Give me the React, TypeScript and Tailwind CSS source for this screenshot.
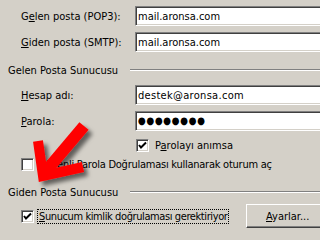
const sunken =
  "border border-t-[#808080] border-l-[#808080] border-r-white border-b-white shadow-[inset_1px_1px_0_#404040,inset_-1px_-1px_0_#d4d0c8]";

function TextBox({ children }: { children: React.ReactNode }) {
  return (
    <div className={`h-[20px] w-[200px] shrink-0 bg-white ${sunken} flex items-center pl-[2px]`}>
      {children}
    </div>
  );
}

function Check({ checked }: { checked?: boolean }) {
  return (
    <div className={`w-[13px] h-[13px] shrink-0 bg-white ${sunken} flex items-center justify-center`}>
      {checked && (
        <svg width="9" height="9" viewBox="0 0 9 9">
          <path d="M1 4 L3 6.5 L8 1.5" fill="none" stroke="#000" strokeWidth="2" />
        </svg>
      )}
    </div>
  );
}

function Field({ label, keyIdx, children }: { label: string; keyIdx: number; children: React.ReactNode }) {
  return (
    <div className="flex items-center h-[20px]">
      <span className="w-[135px] shrink-0 pl-[21px]">
        {label.slice(0, keyIdx)}
        <u>{label[keyIdx]}</u>
        {label.slice(keyIdx + 1)}
      </span>
      {children}
    </div>
  );
}

function GroupHeader({ title }: { title: string }) {
  return (
    <div className="flex items-center h-[14px]">
      <span className="w-[130px] shrink-0 pl-[8px]">{title}</span>
      <div className="flex-1 h-[2px] border-t border-t-[#808080] border-b border-b-white" />
    </div>
  );
}

export default function App() {
  return (
    <div
      className="relative w-[320px] h-[240px] overflow-hidden bg-[#d4d0c8] text-black text-[11px] leading-none font-stretch-condensed"
      style={{ fontFamily: '"DejaVu Sans Condensed", "DejaVu Sans", Tahoma, sans-serif' }}
    >
      <div className="flex flex-col">
        <div className="mt-[6px]">
          <Field label="Gelen posta (POP3):" keyIdx={1}>
            <TextBox>mail.aronsa.com</TextBox>
          </Field>
        </div>
        <div className="mt-[6px]">
          <Field label="Giden posta (SMTP):" keyIdx={0}>
            <TextBox>mail.aronsa.com</TextBox>
          </Field>
        </div>

        <div className="mt-[11px]">
          <GroupHeader title="Gelen Posta Sunucusu" />
        </div>

        <div className="mt-[8px]">
          <Field label="Hesap adı:" keyIdx={0}>
            <TextBox>
              <span className="tracking-[0.3px]">destek@aronsa.com</span>
            </TextBox>
          </Field>
        </div>
        <div className="mt-[6px]">
          <Field label="Parola:" keyIdx={0}>
            <TextBox>
              <span className="text-[10px] tracking-[0.6px]">●●●●●●●●</span>
            </TextBox>
          </Field>
        </div>

        <div className="mt-[8px] flex items-center h-[13px] pl-[136px] gap-[6px]">
          <Check checked />
          <span>
            P<u>a</u>rolayı anımsa
          </span>
        </div>

        <div className="mt-[6px] flex items-center h-[13px] pl-[21px] gap-[4px]">
          <Check />
          <span className="tracking-[-0.25px]">Güvenli Parola Doğrulaması kullanarak oturum aç</span>
        </div>

        <div className="mt-[14px]">
          <GroupHeader title="Giden Posta Sunucusu" />
        </div>

        <div className="mt-[5px] flex items-center h-[24px] pl-[21px]">
          <Check checked />
          <span className="ml-[3px] border border-dotted border-black px-[1px] py-[1px] tracking-[-0.4px]">
            <u>S</u>unucum kimlik doğrulaması gerektiriyor
          </span>
          <button className="ml-auto mr-[-10px] w-[84px] h-[24px] bg-[#d4d0c8] border border-t-white border-l-white border-b-[#404040] border-r-[#404040] shadow-[inset_-1px_-1px_0_#808080] text-left pl-[19px]">
            <u>A</u>yarlar...
          </button>
        </div>
      </div>

      <svg className="absolute inset-0 pointer-events-none" width="320" height="240" viewBox="0 0 320 240">
        <defs>
          <filter id="sh" x="-30%" y="-30%" width="160%" height="160%">
            <feDropShadow dx="4" dy="4" stdDeviation="2" floodColor="#000" floodOpacity="0.55" />
          </filter>
        </defs>
        <g filter="url(#sh)" stroke="#ff0000" fill="none">
          <path d="M38 141 L43 176 L83 167" strokeWidth="10" strokeLinejoin="miter" strokeMiterlimit="10" />
          <path d="M46 171 L84 126" strokeWidth="12" />
        </g>
      </svg>
    </div>
  );
}
